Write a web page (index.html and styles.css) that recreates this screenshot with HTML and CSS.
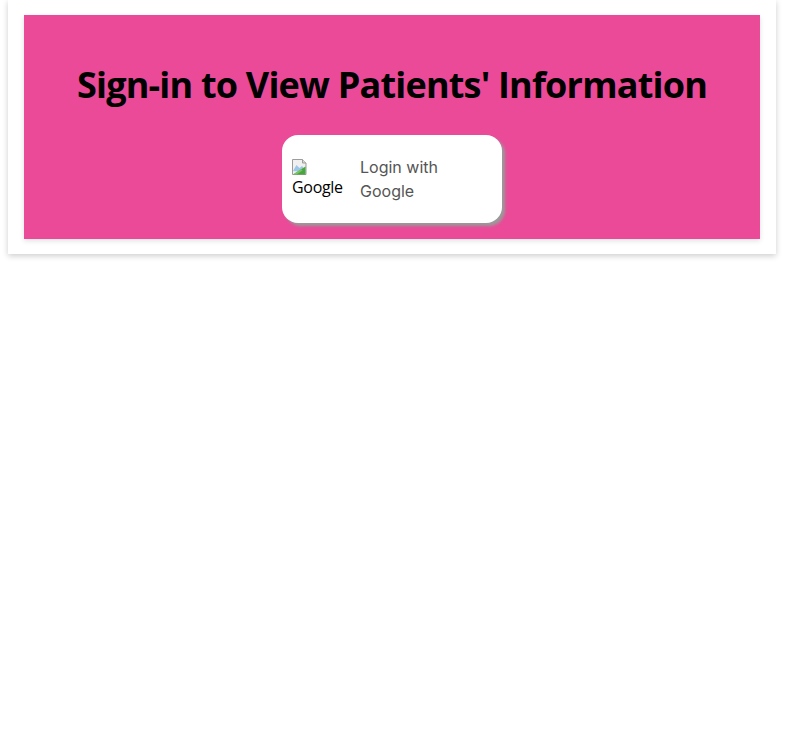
FILE: index.html
```html
<!DOCTYPE html>
<html>
<head>
<meta charset="utf-8">
<link rel="stylesheet" href="styles.css">
</head>
<body>
<div class="card">
  <div class="hero">
    <h1 class="title">Sign-in to View Patients' Information</h1>
    <button class="login">
      <span class="img-alt">
        <svg class="broken" width="16" height="16" viewBox="0 0 16 16">
          <path d="M0.5 0.5h10l3.5 3.5v11.5h-13.5z" fill="#f0f0f0" stroke="#9c9c9c" stroke-width="1"/>
          <path d="M10.5 0.5v3.5h3.5" fill="#d8d8d8" stroke="#9c9c9c" stroke-width="1"/>
          <path d="M1 12l3.5-6 3 3 2.5-2 4 4.5v2z" fill="#9cc6e8"/>
          <path d="M1 15.5l12.5-8v8z" fill="#4aa63c"/>
          <path d="M1 15.5l8-5.2 1.5 1.2-6 4z" fill="#7cc466"/>
        </svg>
        <span class="alt-text">Google</span>
      </span>
      <span class="label">Login with Google</span>
    </button>
  </div>
</div>
</body>
</html>
```
FILE: styles.css
```css
html, body {
  margin: 0;
  padding: 0;
  background: #fff;
}
body {
  padding: 0 8px;
  min-height: 733px;
}
.card {
  width: 768px;
  box-sizing: border-box;
  padding: 15px 16px;
  background: #fff;
  box-shadow: 0 2px 6px rgba(0, 0, 0, 0.2);
}
.hero {
  background: #ea4a98;
  height: 224px;
  box-sizing: border-box;
  padding-top: 48px;
  display: flex;
  flex-direction: column;
  align-items: center;
  box-shadow: 0 2px 5px rgba(0, 0, 0, 0.12);
}
.title {
  margin: 0;
  font-family: "Open Sans", "DejaVu Sans", sans-serif;
  font-weight: 700;
  font-size: 36px;
  line-height: 44px;
  color: #000;
  letter-spacing: -0.8px;
}
.login {
  margin-top: 28px;
  width: 220px;
  height: 88px;
  border: none;
  border-radius: 16px;
  background: #fff;
  box-shadow: 3px 3px 3px #9a9a9a;
  display: flex;
  align-items: center;
  padding: 0 10px;
  gap: 16px;
  text-align: left;
  cursor: pointer;
}
.img-alt {
  display: flex;
  flex-direction: column;
  align-items: flex-start;
  width: 52px;
  font-family: "Open Sans", "Noto Sans", sans-serif;
  font-size: 16px;
  line-height: 24px;
  color: #000;
  letter-spacing: -0.3px;
}
.broken {
  display: block;
}
.label {
  font-family: "Inter", "Open Sans", sans-serif;
  font-size: 16px;
  line-height: 24px;
  color: #555;
  width: 100px;
}
```
